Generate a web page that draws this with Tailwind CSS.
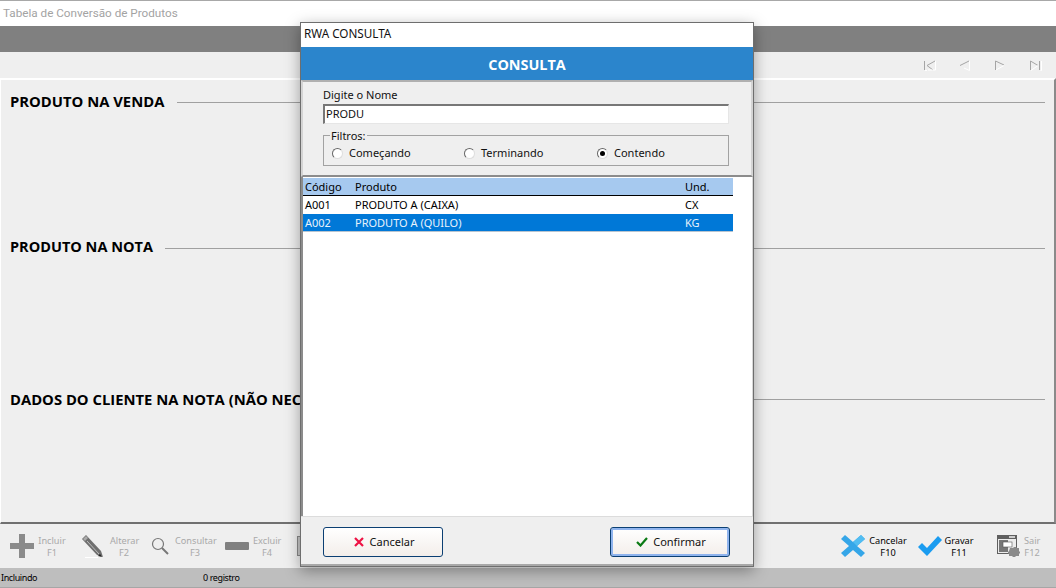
<!DOCTYPE html>
<html lang="pt"><head><meta charset="utf-8">
<script src="https://cdn.jsdelivr.net/npm/@tailwindcss/browser@4"></script>
</head>
<body class="m-0 overflow-hidden">
<div class="relative w-[1056px] h-[588px] overflow-hidden flex flex-col bg-[#efefef] font-['Noto_Sans',sans-serif] text-[11px] text-black">
  <div class="h-[26px] shrink-0 bg-white border-t border-[#a8a8a8] pl-[3px] flex items-center font-['Roboto',sans-serif] text-[11.700px] text-[#a3a3a3]">Tabela de Conversão de Produtos</div>
  <div class="h-[26px] shrink-0 bg-[#808080]"></div>
  <div class="h-[26px] shrink-0 flex items-center justify-end pr-[14px] pt-px">
    <svg class="w-[13px] h-[11px]" viewBox="0 0 13 11" fill="none"><path d="M1.500 10V1M12 1L4 5.500 10 10" stroke="#a5a5a5"/><path d="M12.500 1v9H5M2 10.500h2" stroke="#fff"/></svg>
    <svg class="w-[11px] h-[11px] ml-[23px]" viewBox="0 0 11 11" fill="none"><path d="M10 1L1 5.500" stroke="#a5a5a5"/><path d="M10.500 1v9.500L5 8" stroke="#fff"/></svg>
    <svg class="w-[11px] h-[11px] ml-[24px]" viewBox="0 0 11 11" fill="none"><path d="M1.500 10V1L10 5" stroke="#a5a5a5"/><path d="M2 10l8-4.500" stroke="#fff"/></svg>
    <svg class="w-[13px] h-[11px] ml-[24px]" viewBox="0 0 13 11" fill="none"><path d="M1.500 10V1L9 5.500M10.500 1v9" stroke="#a5a5a5"/><path d="M2 10.500l7-5M11.500 10.500h1V1" stroke="#fff"/></svg>
  </div>
  <div class="h-[446px] shrink-0 border-t-2 border-t-white border-l border-l-white border-r-2 border-r-[#8a8a8a] border-b-2 border-b-[#707070] flex flex-col pl-[9px] pr-[9px]">
    <div class="mt-[12px] h-[20px] flex items-center gap-[13px] font-['Open_Sans',sans-serif] font-bold text-[14.800px] leading-none"><span class="whitespace-nowrap pb-[2px]">PRODUTO NA VENDA</span><div class="flex-1 h-px bg-[#a0a0a0]"></div></div>
    <div class="mt-[126px] h-[20px] flex items-center gap-[12px] font-['Open_Sans',sans-serif] font-bold text-[14.500px] leading-none"><span class="whitespace-nowrap pb-[2px]">PRODUTO NA NOTA</span><div class="flex-1 h-px bg-[#a0a0a0]"></div></div>
    <div class="mt-[131px] h-[20px] flex items-center gap-[13px] font-['Open_Sans',sans-serif] font-bold text-[14.800px] leading-none"><span class="whitespace-nowrap">DADOS DO CLIENTE NA NOTA (NÃO NECESSÁRIO)</span><div class="flex-1 h-px bg-[#a0a0a0]"></div></div>
  </div>
  <div class="h-[44px] shrink-0 flex text-[#a9a9a9] text-[9.200px] leading-[12px] text-center">
    <div class="w-[82px] shrink-0 flex items-center pl-[10px] gap-[4px]"><svg class="w-[24px] h-[24px] shrink-0" viewBox="0 0 24 24"><path d="M9 0h6v9h9v6h-9v9H9v-9H0V9h9z" fill="#8b8b8b"/></svg><span class="w-[28px] mt-[2px]">Incluir<br>F1</span></div>
    <div class="w-[69px] shrink-0 flex items-center gap-[6px]"><svg class="w-[22px] h-[24px] shrink-0" viewBox="0 0 22 24"><path d="M0 5l4-4 15 16 2 6-6-2z" fill="#6f6f6f"/><path d="M1 5l3-3 2 2-3 3z" fill="#aaa"/><path d="M5 7l12 13" stroke="#bdbdbd"/><path d="M18 20l2 3-4-1z" fill="#222"/><path d="M3 23.500h13" stroke="#fff"/></svg><span class="w-[28px] mt-[2px]">Alterar<br>F2</span></div>
    <div class="w-[74px] shrink-0 flex items-center gap-[6px]"><svg class="w-[18px] h-[18px] shrink-0" viewBox="0 0 18 18" fill="none" stroke="#777" stroke-width="1.200"><circle cx="7" cy="7" r="5.500"/><path d="M11 11l6 6" stroke-width="2"/></svg><span class="w-[40px] mt-[2px]">Consultar<br>F3</span></div>
    <div class="w-[72px] shrink-0 flex items-center gap-[4px]"><div class="w-[24px] h-[8px] rounded-[1px] bg-[#808080] shrink-0"></div><span class="w-[28px] mt-[2px]">Excluir<br>F4</span></div>
    <div class="w-[22px] shrink-0 flex items-center"><div class="w-[22px] h-[20px] border border-[#8a8a8a] bg-[#c8c8c8]"></div></div>
    <div class="flex-1"></div>
    <div class="w-[77px] shrink-0 flex items-center gap-[3px] text-black"><svg class="w-[24px] h-[24px] shrink-0" viewBox="0 0 24 24"><path d="M4 1l8 7 8-7 4 4-8 7 8 7-4 4-8-7-8 7-4-4 8-7-8-7z" fill="#35a6e8"/><path d="M4 1l8 7 8-7 4 4-8 7-4-4z" fill="#52bdf2"/></svg><span class="w-[40px] mt-[2px]">Cancelar<br>F10</span></div>
    <div class="w-[79px] shrink-0 flex items-center gap-[1px] text-black"><svg class="w-[24px] h-[20px] shrink-0" viewBox="0 0 24 20"><path d="M0 11l4-4 5 5L20 0l4 4L9 20z" fill="#1b9cf0"/></svg><span class="w-[32px] mt-[2px]">Gravar<br>F11</span></div>
    <div class="w-[59px] shrink-0 flex items-center gap-[4px]"><svg class="w-[23px] h-[22px] shrink-0" viewBox="0 0 23 22"><rect x="0" y="0" width="20" height="19" fill="#5f5f5f"/><rect x="12" y="1" width="6" height="2" fill="#ccc"/><rect x="1" y="4" width="18" height="14" fill="#ececec"/><rect x="2" y="5" width="9" height="12" fill="#777"/><rect x="6" y="7" width="9" height="5" fill="#fff" stroke="#555" stroke-width=".6"/><path d="M13 13h3l1-1h2l1 1h2v3l1 1v1l-1 1v2h-3l-1 1h-2l-1-1h-3v-2l-1-1v-1l1-1z" fill="#8a8a8a"/></svg><span class="w-[16px] mt-[2px]">Sair<br>F12</span></div>
  </div>
  <div class="flex-1 bg-[#bebebe] border-b border-[#a6a6a6] flex items-center text-[9px] tracking-[-0.4px]">
    <span class="w-[203px] pl-[1px]">Incluindo</span><span>0 registro</span>
  </div>

  <div class="absolute left-[300px] top-[22px] w-[454px] h-[545px] bg-white border border-[#6e6e6e] shadow-[0_4px_14px_rgba(0,0,0,0.35)] flex flex-col">
    <div class="h-[24px] shrink-0 flex items-center pl-[3px] pb-[2px] text-[11.700px] text-[#111]">RWA CONSULTA</div>
    <div class="h-[33px] shrink-0 bg-[#2b85cc] flex items-center justify-center pt-[2px] font-['Open_Sans',sans-serif] font-bold text-[14.400px] text-white">CONSULTA</div>
    <div class="h-[97px] shrink-0 bg-[#efefef] border-2 border-t-[#b0b0b0] border-l-[#d4d4d4] border-r-[#d4d4d4] border-b-[#8c8c8c] pl-[20px] pt-[6px] text-[#111]">
      <div class="h-[14px] leading-[14px]">Digite o Nome</div>
      <div class="mt-[2px] h-[20px] w-[406px] bg-white border-t-2 border-l-2 border-t-[#777] border-l-[#777] border-r border-b border-r-[#e6e6e6] border-b-[#e6e6e6] flex items-center pl-[1px]">PRODU</div>
      <div class="relative mt-[11px] h-[31px] w-[406px] border border-[#a2a2a2]">
        <span class="absolute left-[6px] -top-[7px] bg-[#efefef] px-px leading-[13px]">Filtros:</span>
        <div class="absolute top-[11px] left-[8px] right-0 flex items-center h-[13px]">
          <span class="w-[132px] flex items-center gap-[6px]"><span class="w-[11px] h-[11px] rounded-full bg-white border border-[#666] border-r-[#ddd] border-b-[#ddd]"></span>Começando</span>
          <span class="w-[133px] flex items-center gap-[6px]"><span class="w-[11px] h-[11px] rounded-full bg-white border border-[#666] border-r-[#ddd] border-b-[#ddd]"></span>Terminando</span>
          <span class="flex items-center gap-[6px]"><span class="w-[11px] h-[11px] rounded-full bg-white border border-[#666] border-r-[#ddd] border-b-[#ddd] flex items-center justify-center"><span class="w-[5px] h-[5px] rounded-full bg-black"></span></span>Contendo</span>
        </div>
      </div>
    </div>
    <div class="h-[339px] shrink-0 bg-white border-l-2 border-l-[#8c8c8c] border-r border-r-[#d8d8d8] pt-px">
      <div class="w-[430px] h-[18px] bg-[#a6c9ef] border-b border-black flex items-center pt-px"><span class="w-[52px] pl-[2px]">Código</span><span class="w-[330px]">Produto</span><span>Und.</span></div>
      <div class="w-[430px] h-[18px] flex items-center pt-px"><span class="w-[52px] pl-[2px]">A001</span><span class="w-[330px]">PRODUTO A (CAIXA)</span><span>CX</span></div>
      <div class="w-[430px] h-[18px] bg-[#0078d7] border-b border-b-[#b8c4cf] text-[#e8f2fb] flex items-center pt-[2px]"><span class="w-[52px] pl-[2px]">A002</span><span class="w-[330px]">PRODUTO A (QUILO)</span><span>KG</span></div>
    </div>
    <div class="flex-1 bg-[#efefef] border-t border-[#dcdcdc] border-b-2 border-b-[#a8a8a8] flex items-center justify-between pl-[22px] pr-[23px] pt-[2px] text-[#111]">
      <button class="w-[120px] h-[30px] rounded-[3px] border border-[#0b3f73] bg-linear-to-b from-white to-[#f3eeea] flex items-center justify-center gap-[6px] pl-[2px] pt-[1px]"><svg class="w-[10px] h-[10px]" viewBox="0 0 10 10" stroke="#ee1144" stroke-width="2.200" fill="none"><path d="M1 1l8 8M9 1l-8 8"/></svg>Cancelar</button>
      <button class="w-[120px] h-[30px] rounded-[3px] border border-[#0b3f73] bg-linear-to-b from-white to-[#f3eeea] shadow-[inset_0_0_0_2px_#8fb4ee] flex items-center justify-center gap-[5px] pl-[2px] pt-[1px]"><svg class="w-[12px] h-[10px]" viewBox="0 0 12 10" stroke="#0a7a14" stroke-width="2.200" fill="none"><path d="M1 5l3.500 3.500L11 1"/></svg>Confirmar</button>
    </div>
  </div>
</div>
</body></html>
